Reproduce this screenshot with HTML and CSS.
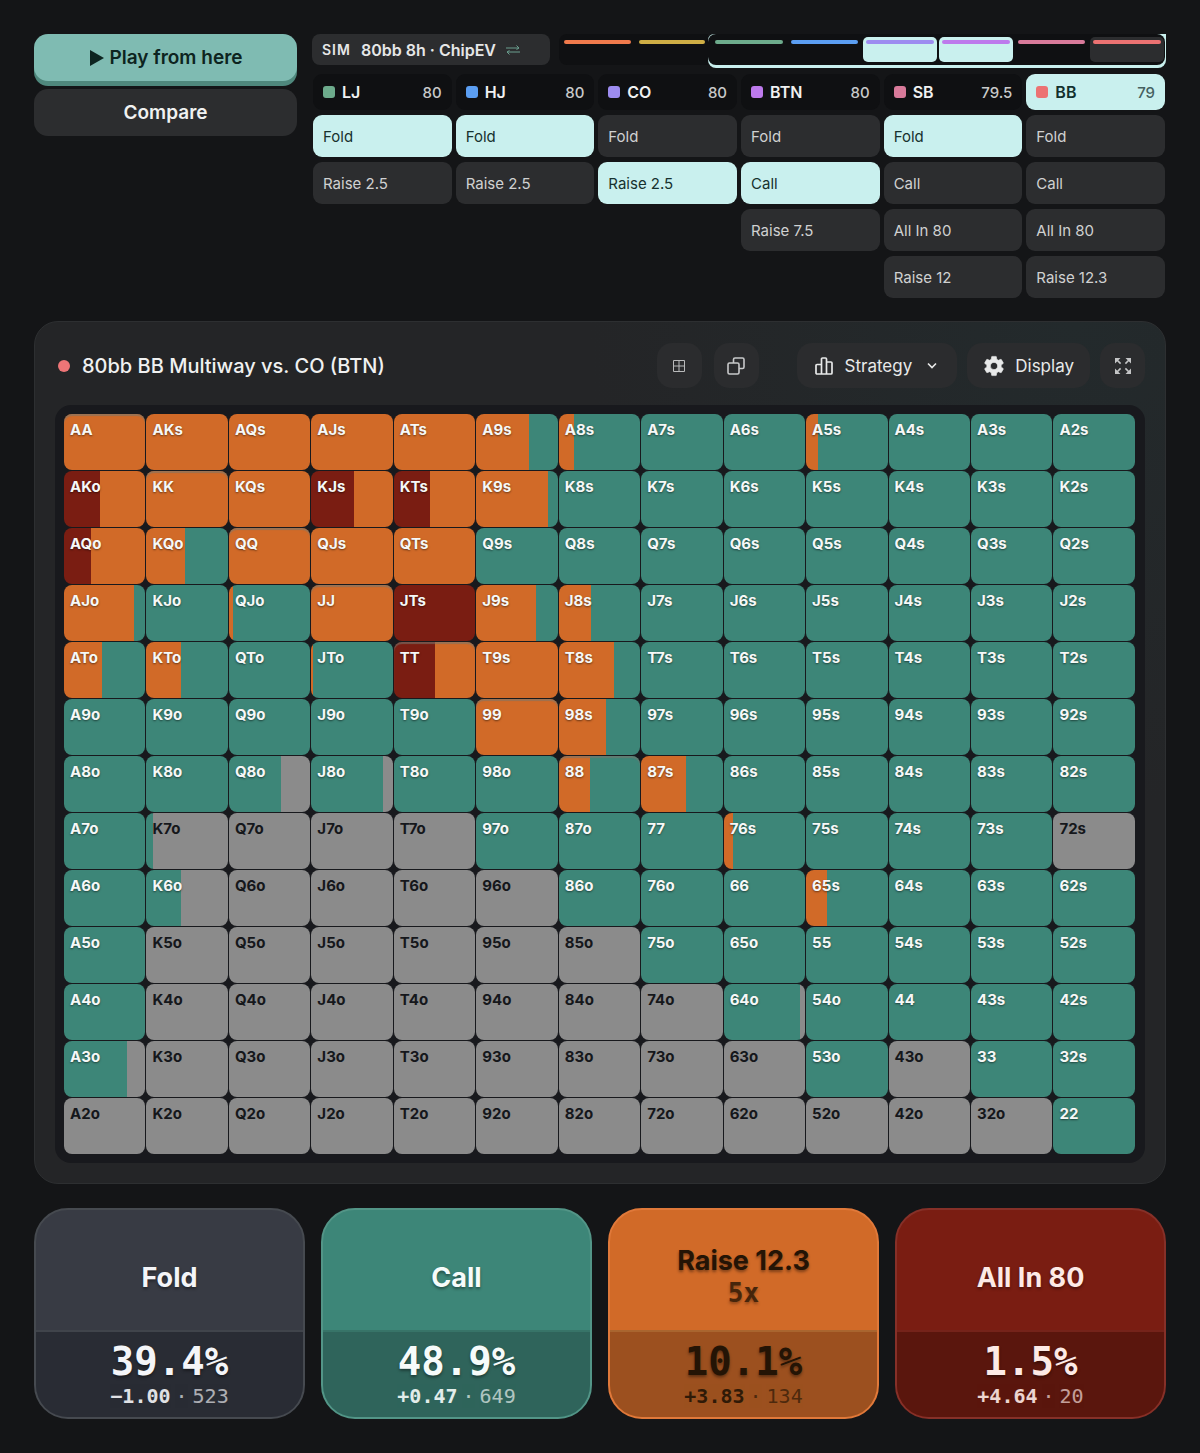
FILE: index.html
```html
<!DOCTYPE html>
<html lang="en">
<head>
<meta charset="utf-8">
<meta name="viewport" content="width=device-width, initial-scale=1">
<title>80bb BB Multiway vs. CO (BTN)</title>
<link rel="stylesheet" href="styles.css">
</head>
<body>
<main class="page">
  <section class="top">
    <div class="launch">
      <button class="play" type="button">
        <svg class="play-icon" width="16" height="16" viewBox="0 0 16 16" aria-hidden="true"><path d="M1 0v16l14-8z" fill="currentColor"/></svg>
        Play from here
      </button>
      <button class="compare" type="button">Compare</button>
    </div>

    <div class="tree">
      <div class="tree-head">
        <button class="sim" type="button">
          <span class="sim-tag">SIM</span>
          <span>80bb 8h · ChipEV</span>
          <svg width="14" height="10" viewBox="0 0 14 10" fill="none" stroke="#6a9f8f" stroke-width="1" aria-hidden="true"><path d="M0 3h13M10.500.500 13 3l-2.500 1.500M14 7H1M3.500 5.500 1 7l2.500 2.500"/></svg>
        </button>
        <div class="timeline">
          <div class="past">
            <span class="seg utg"></span><span class="seg utg1"></span>
          </div>
          <div class="window">
            <div class="window-in">
              <span class="seg lj"></span><span class="seg hj"></span><span class="seg co on"></span><span class="seg btn on"></span><span class="seg sb"></span><span class="seg bb now"></span>
            </div>
          </div>
        </div>
      </div>

      <div class="seats">
        <div class="seat">
          <div class="seat-head"><i class="chip lj"></i><b>LJ</b><span>80</span></div>
          <button class="act on" type="button">Fold</button>
          <button class="act" type="button">Raise 2.5</button>
        </div>
        <div class="seat">
          <div class="seat-head"><i class="chip hj"></i><b>HJ</b><span>80</span></div>
          <button class="act on" type="button">Fold</button>
          <button class="act" type="button">Raise 2.5</button>
        </div>
        <div class="seat">
          <div class="seat-head"><i class="chip co"></i><b>CO</b><span>80</span></div>
          <button class="act" type="button">Fold</button>
          <button class="act on" type="button">Raise 2.5</button>
        </div>
        <div class="seat">
          <div class="seat-head"><i class="chip btn"></i><b>BTN</b><span>80</span></div>
          <button class="act" type="button">Fold</button>
          <button class="act on" type="button">Call</button>
          <button class="act" type="button">Raise 7.5</button>
        </div>
        <div class="seat">
          <div class="seat-head"><i class="chip sb"></i><b>SB</b><span>79.5</span></div>
          <button class="act on" type="button">Fold</button>
          <button class="act" type="button">Call</button>
          <button class="act" type="button">All In 80</button>
          <button class="act" type="button">Raise 12</button>
        </div>
        <div class="seat">
          <div class="seat-head current"><i class="chip bb"></i><b>BB</b><span>79</span></div>
          <button class="act" type="button">Fold</button>
          <button class="act" type="button">Call</button>
          <button class="act" type="button">All In 80</button>
          <button class="act" type="button">Raise 12.3</button>
        </div>
      </div>
    </div>
  </section>

  <section class="panel">
    <header class="panel-head">
      <span class="dot"></span>
      <h1>80bb BB Multiway vs. CO (BTN)</h1>
      <div class="tools views">
        <button class="tool square" type="button" aria-label="Grid view">
          <svg width="12" height="12" viewBox="0 0 12 12" fill="none" stroke="#b9babb" aria-hidden="true"><path d="M.5.5h11v11H.5zM6 .5v11M.5 6h11"/></svg>
        </button>
        <button class="tool square" type="button" aria-label="Duplicate">
          <svg width="18" height="18" viewBox="0 0 18 18" fill="none" stroke="#c8c9ca" stroke-width="1.600" aria-hidden="true"><rect x="1" y="6" width="11" height="11" rx="1.500"/><path d="M6.500 6V2.500A1.500 1.500 0 0 1 8 1h7.500A1.500 1.500 0 0 1 17 2.500V10a1.500 1.500 0 0 1-1.500 1.500H12"/></svg>
        </button>
      </div>
      <div class="tools">
        <button class="tool strategy" type="button" aria-haspopup="menu">
          <svg width="18" height="18" viewBox="0 0 18 18" fill="none" stroke="currentColor" stroke-width="1.700" stroke-linejoin="round" aria-hidden="true"><path d="M6.500 17H2a1 1 0 0 1-1-1V8.500a1 1 0 0 1 1-1h4.500M6.500 17V2a1 1 0 0 1 1-1h3a1 1 0 0 1 1 1v15zM11.500 5H16a1 1 0 0 1 1 1v10a1 1 0 0 1-1 1h-4.500"/></svg>
          Strategy
          <svg class="caret" width="10" height="7" viewBox="0 0 10 7" fill="none" stroke="currentColor" stroke-width="1.600" aria-hidden="true"><path d="m1 1.500 4 4 4-4"/></svg>
        </button>
        <button class="tool" type="button">
          <svg width="22" height="22" viewBox="1 1 22 22" fill="currentColor" stroke="currentColor" stroke-width=".600" aria-hidden="true"><path d="M19.140 12.940c.040-.3.060-.610.060-.940 0-.320-.020-.640-.070-.940l2.030-1.580a.49.49 0 0 0 .120-.610l-1.920-3.320a.488.488 0 0 0-.590-.220l-2.390.960c-.5-.380-1.030-.7-1.620-.940l-.360-2.540a.484.484 0 0 0-.480-.410h-3.840c-.240 0-.430.170-.470.410l-.360 2.540c-.590.240-1.130.570-1.620.940l-2.390-.960c-.220-.080-.470 0-.590.220L2.740 8.870c-.120.210-.080.470.120.610l2.030 1.580c-.050.3-.090.630-.090.940s.020.640.070.940l-2.030 1.580a.49.49 0 0 0-.120.610l1.920 3.320c.120.220.370.290.590.220l2.390-.960c.5.380 1.030.7 1.620.940l.360 2.540c.050.240.240.410.480.410h3.840c.240 0 .440-.170.470-.410l.360-2.540c.590-.240 1.130-.560 1.620-.940l2.390.960c.220.080.470 0 .590-.220l1.920-3.320c.120-.220.070-.470-.120-.610zM12 15.600A3.610 3.610 0 0 1 8.400 12c0-1.980 1.620-3.600 3.600-3.600s3.600 1.620 3.600 3.600-1.620 3.600-3.600 3.600z"/></svg>
          Display
        </button>
        <button class="tool square" type="button" aria-label="Full screen">
          <svg width="16" height="16" viewBox="0 0 16 16" fill="#c4c5c6" stroke="#c4c5c6" aria-hidden="true"><path stroke="none" d="M0 0h5.500L0 5.500zM16 0v5.500L10.500 0zM0 16v-5.500L5.500 16zM16 16h-5.500l5.500-5.500z"/><path stroke-width="1.600" d="M2 2l3.600 3.600M14 2l-3.600 3.600M2 14l3.600-3.600M14 14l-3.600-3.600"/></svg>
        </button>
      </div>
    </header>
    <div class="matrix-wrap">
      <table class="matrix" aria-label="Strategy by starting hand"><tbody id="matrix"></tbody></table>
    </div>
  </section>

  <section class="cards">
    <button class="card fold" type="button">
      <span class="card-name">Fold</span>
      <span class="card-stats"><strong>39.4%</strong><span class="sub"><b>−1.00</b><i>·</i><span>523</span></span></span>
    </button>
    <button class="card call" type="button">
      <span class="card-name">Call</span>
      <span class="card-stats"><strong>48.9%</strong><span class="sub"><b>+0.47</b><i>·</i><span>649</span></span></span>
    </button>
    <button class="card raise" type="button">
      <span class="card-name">Raise 12.3<small>5x</small></span>
      <span class="card-stats"><strong>10.1%</strong><span class="sub"><b>+3.83</b><i>·</i><span>134</span></span></span>
    </button>
    <button class="card allin" type="button">
      <span class="card-name">All In 80</span>
      <span class="card-stats"><strong>1.5%</strong><span class="sub"><b>+4.64</b><i>·</i><span>20</span></span></span>
    </button>
  </section>
</main>
<script src="matrix.js"></script>
</body>
</html>
```
FILE: styles.css
```css
:root {
  --call: #3d8678;
  --raise: #d16a28;
  --allin: #7a1d12;
  --fold: #8b8b8b;
  --pick: #c9f0ee;
  --key: #2c2d2f;
  --well: #0f1012;
}
* { box-sizing: border-box; }
body {
  margin: 0;
  background: #141517;
  color: #f0f1f1;
  font-family: Inter, "Open Sans", sans-serif;
}
button {
  border: 0;
  margin: 0;
  padding: 0;
  color: inherit;
  font: inherit;
  cursor: pointer;
}
.page { padding: 34px; }

.top { display: flex; gap: 15px; align-items: flex-start; }
.launch { flex: 263 1 0; display: flex; flex-direction: column; gap: 3px; }
.play, .compare {
  height: 47px;
  border-radius: 14px;
  font-size: 19px;
  font-weight: 600;
}
.play {
  display: flex;
  align-items: center;
  justify-content: center;
  gap: 5px;
  margin-bottom: 5px;
  background: #7fbbb2;
  color: #0d2420;
  box-shadow: 0 5px 0 #4f887d;
}
.compare { background: var(--key); }

.tree { flex: 854 1 0; min-width: 0; }
.tree-head { display: flex; gap: 9px; height: 34px; align-items: flex-start; }
.sim {
  flex: 228 1 0;
  display: flex;
  align-items: center;
  gap: 10px;
  height: 31px;
  padding-left: 10px;
  border-radius: 8px;
  background: var(--key);
  font-size: 16px;
  font-weight: 600;
  color: #e6e7e7;
  white-space: nowrap;
}
.sim-tag { font-size: 14px; letter-spacing: 1px; }
.timeline { flex: 607 1 0; display: flex; height: 34px; }
.past {
  flex: 147 1 0;
  display: flex;
  gap: 2px;
  height: 31px;
  padding: 3px 0 3px 2px;
  border-radius: 8px 0 0 8px;
  background: var(--well);
}
.window {
  flex: 457 1 0;
  padding: 0 1px 3px 0;
  border-radius: 6px 0 8px 8px;
  background: var(--pick);
}
.window-in {
  display: flex;
  gap: 2px;
  height: 31px;
  padding: 3px 1px 3px 4px;
  border-radius: 8px;
  background: var(--well);
}
.seg { flex: 1; padding: 3px; border-radius: 5px; }
.seg::before {
  content: "";
  display: block;
  height: 4px;
  border-radius: 2px;
  background: var(--seat);
}
.seg.on { background: var(--pick); }
.seg.now { background: var(--key); }
.utg { --seat: #f07a4c; }
.utg1 { --seat: #cfae45; }
.lj { --seat: #6dab8c; }
.hj { --seat: #5b9ef2; }
.co { --seat: #9d8cf0; }
.btn { --seat: #bd7aec; }
.sb { --seat: #d87a9a; }
.bb { --seat: #ec7272; }

.seats {
  display: grid;
  grid-template-columns: repeat(6, 1fr);
  gap: 4px;
  padding: 6px 1px 0;
  align-items: start;
}
.seat { display: flex; flex-direction: column; gap: 5px; }
.seat-head {
  display: flex;
  align-items: center;
  height: 36px;
  padding: 0 10px;
  border-radius: 9px;
  background: var(--well);
  font-size: 16px;
}
.seat-head b { flex: 1; font-weight: 600; }
.seat-head span { font-size: 15px; font-weight: 500; color: #c9caca; }
.seat-head.current { background: var(--pick); color: #12302d; }
.seat-head.current span { color: #45615f; }
.chip {
  width: 12px;
  height: 12px;
  margin-right: 7px;
  border-radius: 3px;
  background: var(--seat);
}
.act {
  height: 42px;
  padding-left: 10px;
  border-radius: 9px;
  background: var(--key);
  color: #d0d1d1;
  font-size: 15px;
  text-align: left;
}
.act.on { background: var(--pick); color: #17322f; }

.panel {
  margin-top: 23px;
  padding: 21px 20px 20px;
  border: 1px solid #2d2f31;
  border-radius: 24px;
  background: radial-gradient(circle at 92% 0, #232a2c, #242527 36%);
}
.panel-head {
  display: flex;
  align-items: center;
  gap: 12px;
  margin-bottom: 17px;
}
.dot {
  width: 12px;
  height: 12px;
  margin-left: 3px;
  border-radius: 50%;
  background: #ee7577;
}
h1 { flex: 1; margin: 0; font-size: 20px; font-weight: 500; line-height: 28px; }
.tools { display: flex; gap: 10px; }
.tools.views { gap: 12px; }
.tools + .tools { margin-left: 26px; }
.tool {
  display: flex;
  align-items: center;
  justify-content: center;
  gap: 10px;
  height: 45px;
  padding: 0 16px;
  border-radius: 15px;
  background: #2b2c2e;
  color: #e8e9e9;
  font-size: 17px;
}
.tool.square { width: 45px; padding: 0; }
.tool.strategy { padding: 0 20px 0 18px; gap: 12px; }
.caret { margin-left: 3px; }

.matrix-wrap { padding: 8px 9px 8px 8px; border-radius: 16px; background: #18191d; }
.matrix {
  width: 100%;
  table-layout: fixed;
  border-collapse: separate;
  border-spacing: 1px;
}
.matrix td {
  height: 56px;
  padding: 7px 0 0 6px;
  border-radius: 8px;
  vertical-align: top;
  font-size: 15px;
  font-weight: 700;
  line-height: 18px;
  color: #f6f8f7;
  text-shadow: 0 1px 2px rgba(0, 0, 0, .5);
  background: linear-gradient(90deg, var(--a) var(--split), var(--b) var(--split));
}
.matrix td.dark { color: #15171b; text-shadow: none; }
.matrix td.pair { box-shadow: inset 0 2px 1px rgba(120, 120, 110, .6); }

.cards {
  display: grid;
  grid-template-columns: repeat(4, 1fr);
  gap: 16px;
  margin-top: 24px;
}
.card {
  display: flex;
  flex-direction: column;
  height: 211px;
  overflow: hidden;
  border: 2px solid var(--edge);
  border-radius: 34px;
  background: var(--face);
  color: var(--ink);
  text-shadow: 0 2px 3px rgba(0, 0, 0, .4);
}
.card-name {
  flex: 1;
  display: flex;
  flex-direction: column;
  align-items: center;
  justify-content: center;
  width: 100%;
  padding-top: 14px;
  font-size: 27px;
  font-weight: 700;
  line-height: 33px;
}
.card-name small { font: 700 26px/33px "DejaVu Sans Mono", monospace; opacity: .8; }
.card-stats {
  width: 100%;
  height: 87px;
  padding-top: 8px;
  border-top: 2px solid var(--rule);
  background: var(--base);
  font-family: "DejaVu Sans Mono", monospace;
}
.card-stats strong { display: block; font-size: 39px; line-height: 44px; }
.sub {
  display: flex;
  justify-content: center;
  gap: 5px;
  font-size: 20px;
  line-height: 24px;
  text-shadow: none;
}
.sub b { opacity: .9; }
.sub i, .sub span { font-style: normal; opacity: .65; }
.fold { --face: #383b44; --base: #292c34; --edge: #464a50; --rule: #40444b; --ink: #f4f5f8; }
.call { --face: #3d8678; --base: #2f645b; --edge: #539587; --rule: #377468; --ink: #f6fbfa; }
.raise { --face: #d16a28; --base: #9c501f; --edge: #e0793a; --rule: #a9652f; --ink: #241405; }
.allin { --face: #7a1d12; --base: #5a160d; --edge: #863028; --rule: #75231a; --ink: #fdeae6; }
```
FILE: matrix.js
```js
// Starting-hand matrix: suited hands above the diagonal, offsuit below.
const ranks = 'AKQJT98765432';
const tone = { c: 'var(--call)', r: 'var(--raise)', a: 'var(--allin)', f: 'var(--fold)' };

// Hands that play a single action all the time; the rest call.
const pure = {
  r: 'AA AKs AQs AJs ATs KK KQs QQ QJs QTs JJ T9s 99',
  a: 'JTs',
  f: 'Q7o J7o T7o 72s Q6o J6o T6o 96o K5o Q5o J5o T5o 95o 85o ' +
     'K4o Q4o J4o T4o 94o 84o 74o K3o Q3o J3o T3o 93o 83o 73o 63o 43o ' +
     'A2o K2o Q2o J2o T2o 92o 82o 72o 62o 52o 42o 32o'
};

// Mixed hands: first action, second action, share of the first in percent.
const mixed = {
  A9s: ['r', 'c', 65], A8s: ['r', 'c', 18], A5s: ['r', 'c', 15],
  AKo: ['a', 'r', 45], KJs: ['a', 'r', 52], KTs: ['a', 'r', 44], K9s: ['r', 'c', 88],
  AQo: ['a', 'r', 33], KQo: ['r', 'c', 47],
  AJo: ['r', 'c', 86], QJo: ['r', 'c', 5], J9s: ['r', 'c', 73], J8s: ['r', 'c', 39],
  ATo: ['r', 'c', 47], KTo: ['r', 'c', 43], JTo: ['r', 'c', 2], TT: ['a', 'r', 51], T8s: ['r', 'c', 68],
  '98s': ['r', 'c', 58],
  Q8o: ['c', 'f', 64], J8o: ['c', 'f', 88], 88: ['r', 'c', 38], '87s': ['r', 'c', 55],
  K7o: ['c', 'f', 8], '76s': ['r', 'c', 11],
  K6o: ['c', 'f', 43], '65s': ['r', 'c', 26],
  '64o': ['c', 'f', 94], A3o: ['c', 'f', 78]
};

const single = {};
for (const key in pure) pure[key].split(' ').forEach(hand => { single[hand] = key; });

const body = document.getElementById('matrix');
for (let row = 0; row < 13; row++) {
  const tr = body.insertRow();
  for (let col = 0; col < 13; col++) {
    const hand = row === col ? ranks[row] + ranks[row]
      : row < col ? ranks[row] + ranks[col] + 's'
      : ranks[col] + ranks[row] + 'o';
    const only = single[hand] || 'c';
    const [first, second, share] = mixed[hand] || [only, only, 100];
    const td = tr.insertCell();
    td.textContent = hand;
    td.style.setProperty('--a', tone[first]);
    td.style.setProperty('--b', tone[second]);
    td.style.setProperty('--split', share + '%');
    if (first === 'f' || (second === 'f' && share < 20)) td.classList.add('dark');
    if (row === col && first !== 'c') td.classList.add('pair');
  }
}
```
